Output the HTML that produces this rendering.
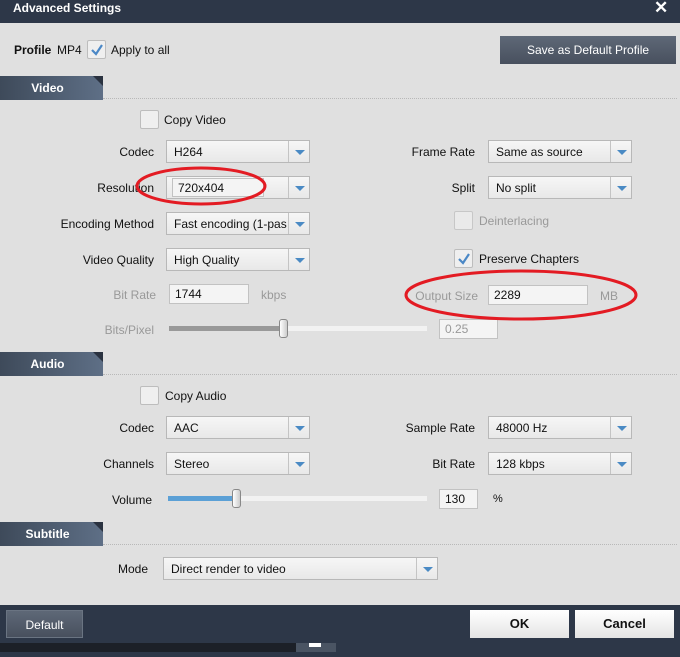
<!DOCTYPE html>
<html><head><style>
*{margin:0;padding:0;box-sizing:border-box}
body{width:680px;height:657px;background:#e0e0e0;font-family:"Liberation Sans",Arial,sans-serif;font-size:12px;color:#111;position:relative;overflow:hidden}
.a{position:absolute}
.title{left:0;top:0;width:680px;height:23px;background:#2d3748}
.lbl{position:absolute;text-align:right;white-space:nowrap;font-size:12px;line-height:14px}
.g{color:#999}
.dd{position:absolute;height:23px;border:1px solid #b8b8b8;background:linear-gradient(#f6f6f6,#e8e8e8);font-size:12px;line-height:22px;padding-left:7px;white-space:nowrap;overflow:hidden}
.dd .ar{position:absolute;right:0;top:0;width:21px;height:21px;border-left:1px solid #c4c4c4;background:linear-gradient(#f6f6f6,#e8e8e8)}
.dd .ar:after{content:"";position:absolute;left:6px;top:9px;border-left:5px solid transparent;border-right:5px solid transparent;border-top:5px solid #4a8ac4}
.cb{position:absolute;width:19px;height:19px;border:1px solid #bdbdbd;background:#efefef;border-radius:2px}
.inp{position:absolute;height:20px;border:1px solid #c2c2c2;background:#f4f4f4;font-size:12px;line-height:19px;padding-left:5px}
.tab{position:absolute;left:0;width:103px;height:24px;background:linear-gradient(90deg,#3e4a5a,#5e6f86);color:#fff;font-weight:bold;font-size:12px;line-height:24px;text-align:center;padding-right:8px}
.tab:after{content:"";position:absolute;right:0;top:0;border-left:10px solid transparent;border-top:10px solid #2a3240}
.dot{position:absolute;left:103px;right:3px;height:0;border-top:1px dotted #b8b8b8}
.btn{position:absolute;text-align:center;font-size:12px}
</style></head><body>
<div class="a title"></div>
<div class="a" style="left:13px;top:1px;color:#fff;font-weight:bold;font-size:12px">Advanced Settings</div>
<div class="a" style="left:654px;top:-2px;color:#fff;font-weight:bold;font-size:17px">✕</div>

<div class="a" style="left:14px;top:43px;font-weight:bold">Profile</div>
<div class="a" style="left:57px;top:43px">MP4</div>
<div class="cb" style="left:87px;top:40px"></div>
<svg class="a" style="left:89px;top:42px" width="16" height="16"><path d="M3 8 L7 12 L13 3" stroke="#4b88c6" stroke-width="2.2" fill="none"/></svg>
<div class="a" style="left:111px;top:43px">Apply to all</div>
<div class="btn" style="left:500px;top:36px;width:176px;height:28px;background:linear-gradient(#5e6877,#48505e);color:#fff;line-height:28px">Save as Default Profile</div>

<div class="tab" style="top:76px">Video</div><div class="dot" style="top:98px"></div>
<div class="cb" style="left:140px;top:110px"></div><div class="a" style="left:164px;top:113px">Copy Video</div>
<div class="lbl" style="right:526px;top:145px">Codec</div><div class="dd" style="left:166px;top:140px;width:144px">H264<div class="ar"></div></div>
<div class="lbl" style="right:526px;top:181px">Resolution</div><div class="dd" style="left:166px;top:176px;width:144px"><div class="ar"></div></div>
<div class="inp" style="left:172px;top:178px;width:92px;height:19px;line-height:18px">720x404</div>
<div class="lbl" style="right:526px;top:217px">Encoding Method</div><div class="dd" style="left:166px;top:212px;width:144px">Fast encoding (1-pas<div class="ar"></div></div>
<div class="lbl" style="right:526px;top:253px">Video Quality</div><div class="dd" style="left:166px;top:248px;width:144px">High Quality<div class="ar"></div></div>
<div class="lbl g" style="right:524px;top:288px">Bit Rate</div><div class="inp" style="left:169px;top:284px;width:80px">1744</div><div class="a g" style="left:261px;top:288px">kbps</div>
<div class="lbl g" style="right:526px;top:323px">Bits/Pixel</div>
<div class="a" style="left:169px;top:326px;width:258px;height:5px;background:#f2f2f2"></div>
<div class="a" style="left:169px;top:326px;width:114px;height:5px;background:#999"></div>
<div class="a" style="left:279px;top:319px;width:9px;height:19px;border:1px solid #888;border-radius:3px;background:linear-gradient(90deg,#fff,#ccc)"></div>
<div class="inp g" style="left:439px;top:319px;width:59px">0.25</div>

<div class="lbl" style="right:205px;top:145px">Frame Rate</div><div class="dd" style="left:488px;top:140px;width:144px">Same as source<div class="ar"></div></div>
<div class="lbl" style="right:205px;top:181px">Split</div><div class="dd" style="left:488px;top:176px;width:144px">No split<div class="ar"></div></div>
<div class="cb" style="left:454px;top:211px;opacity:.7"></div><div class="a g" style="left:479px;top:214px">Deinterlacing</div>
<div class="cb" style="left:454px;top:249px"></div>
<svg class="a" style="left:456px;top:251px" width="16" height="16"><path d="M3 8 L7 12 L13 3" stroke="#4b88c6" stroke-width="2.2" fill="none"/></svg>
<div class="a" style="left:479px;top:252px">Preserve Chapters</div>
<div class="lbl g" style="right:202px;top:289px">Output Size</div><div class="inp" style="left:488px;top:285px;width:100px">2289</div><div class="a g" style="left:600px;top:289px">MB</div>

<div class="tab" style="top:352px">Audio</div><div class="dot" style="top:374px"></div>
<div class="cb" style="left:140px;top:386px"></div><div class="a" style="left:165px;top:389px">Copy Audio</div>
<div class="lbl" style="right:526px;top:421px">Codec</div><div class="dd" style="left:166px;top:416px;width:144px">AAC<div class="ar"></div></div>
<div class="lbl" style="right:526px;top:457px">Channels</div><div class="dd" style="left:166px;top:452px;width:144px">Stereo<div class="ar"></div></div>
<div class="lbl" style="right:205px;top:421px">Sample Rate</div><div class="dd" style="left:488px;top:416px;width:144px">48000 Hz<div class="ar"></div></div>
<div class="lbl" style="right:205px;top:457px">Bit Rate</div><div class="dd" style="left:488px;top:452px;width:144px">128 kbps<div class="ar"></div></div>
<div class="lbl" style="right:528px;top:493px">Volume</div>
<div class="a" style="left:168px;top:496px;width:259px;height:5px;background:#f2f2f2"></div>
<div class="a" style="left:168px;top:496px;width:68px;height:5px;background:#5ba0d6"></div>
<div class="a" style="left:232px;top:489px;width:9px;height:19px;border:1px solid #888;border-radius:3px;background:linear-gradient(90deg,#fff,#ccc)"></div>
<div class="inp" style="left:439px;top:489px;width:39px">130</div><div class="a" style="left:493px;top:493px;font-size:11px">%</div>

<div class="tab" style="top:522px">Subtitle</div><div class="dot" style="top:544px"></div>
<div class="lbl" style="right:532px;top:562px">Mode</div><div class="dd" style="left:163px;top:557px;width:275px">Direct render to video<div class="ar"></div></div>

<div class="a" style="left:0;top:605px;width:680px;height:52px;background:#2d3748"></div>
<div class="btn" style="left:6px;top:610px;width:77px;height:28px;background:linear-gradient(#5e6877,#48505e);color:#fff;line-height:28px;border:1px solid #6a7482">Default</div>
<div class="btn" style="left:470px;top:610px;width:99px;height:28px;background:linear-gradient(#fff,#e4e4e4);line-height:28px;font-weight:bold;font-size:13px">OK</div>
<div class="btn" style="left:575px;top:610px;width:99px;height:28px;background:linear-gradient(#fff,#e4e4e4);line-height:28px;font-weight:bold;font-size:13px">Cancel</div>
<div class="a" style="left:0;top:643px;width:296px;height:9px;background:#1c2028"></div>
<div class="a" style="left:296px;top:643px;width:40px;height:9px;background:#4a5463"></div>
<div class="a" style="left:309px;top:643px;width:12px;height:4px;background:#fff"></div>

<svg class="a" style="left:0;top:0" width="680" height="657">
<ellipse cx="201" cy="186" rx="64" ry="18" fill="none" stroke="#e31b23" stroke-width="3"/>
<ellipse cx="521" cy="295" rx="115" ry="24" fill="none" stroke="#e31b23" stroke-width="3"/>
</svg>
</body></html>
